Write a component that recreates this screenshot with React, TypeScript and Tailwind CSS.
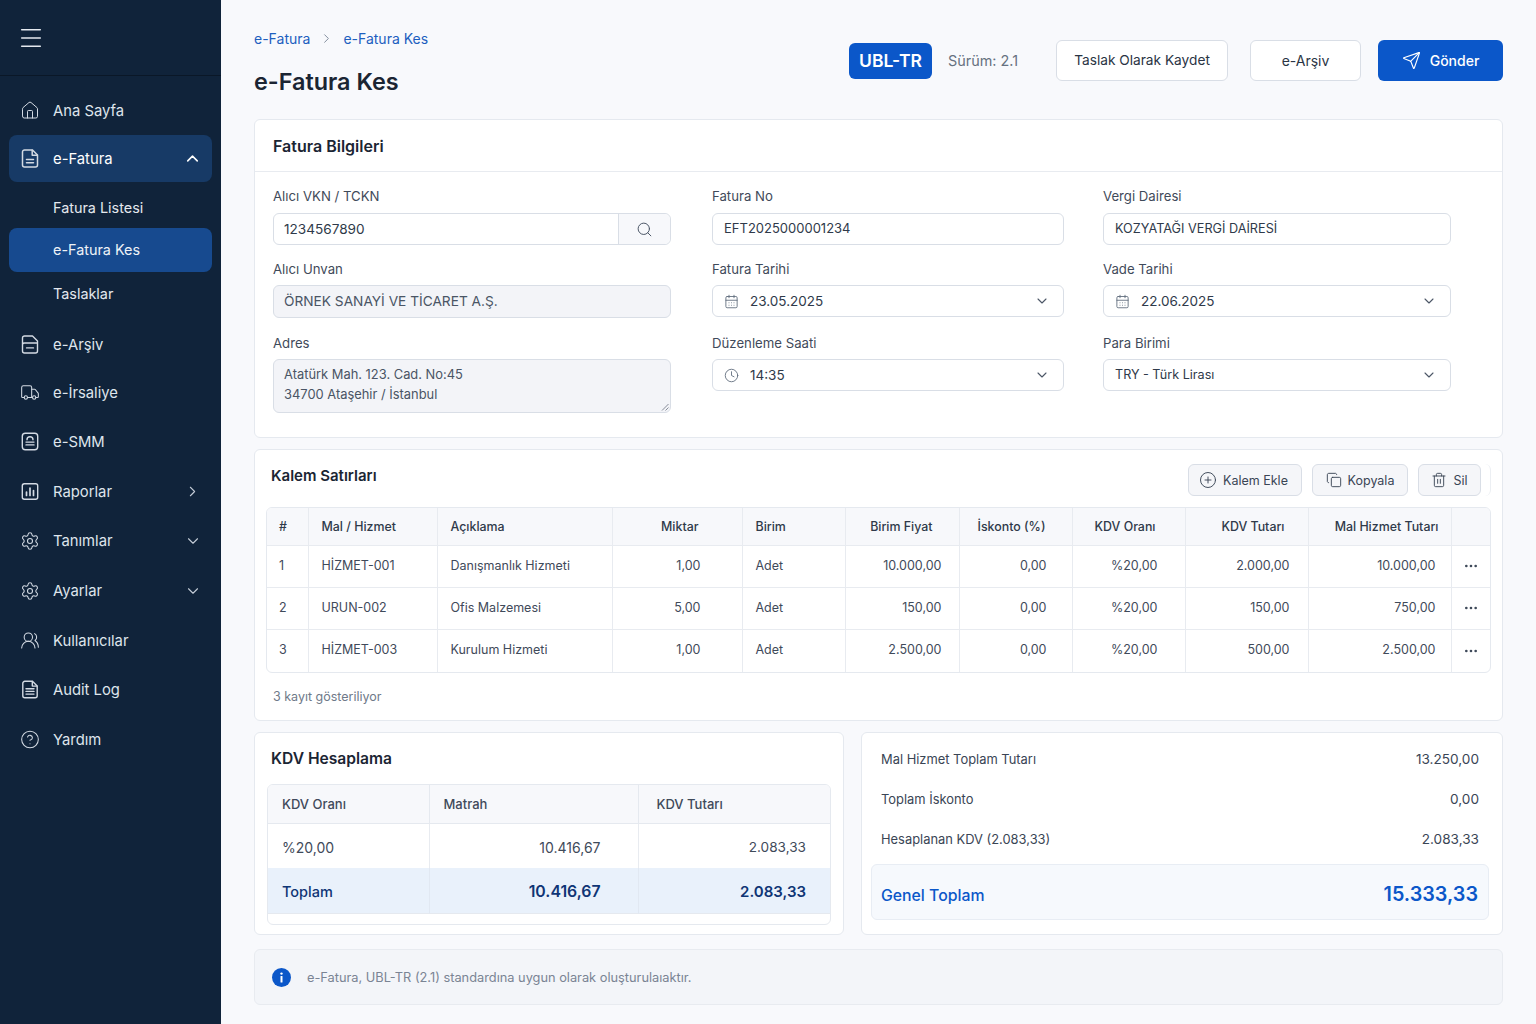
import type { ReactNode } from "react";
import {
  CalendarDays,
  ChevronDown,
  ChevronRight,
  ChevronUp,
  CircleHelp,
  CirclePlus,
  Clock,
  Copy,
  Ellipsis,
  House,
  Menu,
  Search,
  Send,
  Settings,
  Trash2,
  Truck,
  UsersRound,
} from "lucide-react";

function DocIcon() {
  return (
    <svg width="21" height="21" viewBox="0 0 20 20" fill="none" stroke="currentColor" strokeWidth="1.5" strokeLinecap="round" strokeLinejoin="round">
      <path d="M4.5 1.5h8l5 5v10a2 2 0 0 1-2 2h-11a2 2 0 0 1-2-2v-13a2 2 0 0 1 2-2z" />
      <path d="M12.2 1.8v4.9h5M6.5 11h7M6.5 14.2h7" />
    </svg>
  );
}

function ArchiveIcon() {
  return (
    <svg width="21" height="21" viewBox="0 0 20 20" fill="none" stroke="currentColor" strokeWidth="1.4" strokeLinecap="round" strokeLinejoin="round">
      <path d="M2.5 10V3.5a2 2 0 0 1 2-2h8l5 5v2H4.5a2 2 0 0 0-2 2v6a2 2 0 0 0 2 2h11a2 2 0 0 0 2-2V8.5" />
      <path d="M6.5 13.4h7" />
    </svg>
  );
}

function SmmIcon() {
  return (
    <svg width="21" height="21" viewBox="0 0 20 20" fill="none" stroke="currentColor" strokeWidth="1.4" strokeLinecap="round" strokeLinejoin="round">
      <rect x="2.3" y="1.8" width="15.4" height="16.4" rx="3" />
      <path d="M7 8.2a3 3 0 0 1 6 0M6 10.6h8M6 13.4h8" />
    </svg>
  );
}

function ReportIcon() {
  return (
    <svg width="21" height="21" viewBox="0 0 20 20" fill="none" stroke="currentColor" strokeWidth="1.4" strokeLinecap="round">
      <rect x="2.3" y="2.3" width="15.4" height="15.4" rx="2" />
      <path d="M6.5 14v-3.5M10 14V6.5M13.5 14V9" strokeWidth="1.7" />
    </svg>
  );
}

function AuditIcon() {
  return (
    <svg width="21" height="21" viewBox="0 0 20 20" fill="none" stroke="currentColor" strokeWidth="1.4" strokeLinecap="round" strokeLinejoin="round">
      <path d="M4.8 1.8h7.7l4.7 4.7v9.7a2 2 0 0 1-2 2H4.8a2 2 0 0 1-2-2V3.8a2 2 0 0 1 2-2z" />
      <path d="M12.3 2v4.6h4.7M6 9.2h8M6 11.9h8M6 14.6h8" />
    </svg>
  );
}

function NavItem({ icon, label, right, active }: { icon: ReactNode; label: string; right?: ReactNode; active?: boolean }) {
  return (
    <div className={`mx-[9px] flex h-[47px] items-center rounded-lg pl-[11px] pr-[10px] ${active ? "bg-[#173a66] text-white" : "text-[#dfe5ec]"}`}>
      <span className="flex w-[20px] justify-center text-[#d3dae3]">{icon}</span>
      <span className="ml-[13px] flex-1 pt-[2px] text-[14.8px]">{label}</span>
      {right}
    </div>
  );
}

function Sidebar() {
  return (
    <aside className="flex w-[221px] shrink-0 flex-col bg-[#10233a]">
      <div className="flex h-[76px] items-center border-b border-[#0a1727] pl-[17px] text-[#e5e9ef]">
        <Menu size={28} strokeWidth={1.3} />
      </div>
      <div className="mt-[11px] flex flex-col">
        <NavItem icon={<House size={25} strokeWidth={1.2} />} label="Ana Sayfa" />
        <div className="mt-[1px]">
          <NavItem icon={<DocIcon />} label="e-Fatura" active right={<ChevronUp size={19} strokeWidth={2} className="text-white" />} />
        </div>
        <div className="mx-[9px] flex h-[46px] items-center pl-[44px] pt-[5px] text-[14.4px] text-[#e4e8ee]">Fatura Listesi</div>
        <div className="mx-[9px] flex h-[44px] items-center rounded-lg bg-[#174a8f] pl-[44px] text-[14.4px] text-[#eef2f7]">e-Fatura Kes</div>
        <div className="mx-[9px] flex h-[44px] items-center pl-[44px] text-[14.4px] text-[#e4e8ee]">Taslaklar</div>
        <div className="mt-[5px]">
          <NavItem icon={<ArchiveIcon />} label="e-Arşiv" />
        </div>
        <div className="mt-[1px]">
          <NavItem icon={<Truck size={23} strokeWidth={1.25} />} label="e-İrsaliye" />
        </div>
        <div className="mt-[2px]">
          <NavItem icon={<SmmIcon />} label="e-SMM" />
        </div>
        <div className="mt-[3px]">
          <NavItem icon={<ReportIcon />} label="Raporlar" right={<ChevronRight size={17} strokeWidth={1.5} className="mr-[1px] text-[#c3cbd6]" />} />
        </div>
        <div className="mt-[2px]">
          <NavItem icon={<Settings size={22} strokeWidth={1.3} />} label="Tanımlar" right={<ChevronDown size={18} strokeWidth={1.5} className="text-[#c3cbd6]" />} />
        </div>
        <div className="mt-[3px]">
          <NavItem icon={<Settings size={22} strokeWidth={1.3} />} label="Ayarlar" right={<ChevronDown size={18} strokeWidth={1.5} className="text-[#c3cbd6]" />} />
        </div>
        <div className="mt-[3px]">
          <NavItem icon={<UsersRound size={23} strokeWidth={1.25} />} label="Kullanıcılar" />
        </div>
        <div className="mt-[2px]">
          <NavItem icon={<AuditIcon />} label="Audit Log" />
        </div>
        <div className="mt-[3px]">
          <NavItem icon={<CircleHelp size={23} strokeWidth={1.25} />} label="Yardım" />
        </div>
      </div>
    </aside>
  );
}

function Header() {
  return (
    <div className="flex justify-between">
      <div className="pt-[29px]">
        <div className="flex h-[18px] items-center text-[14px] text-[#1d5fbf]">
          <span>e-Fatura</span>
          <ChevronRight size={15} strokeWidth={1.5} className="mx-[9px] text-[#7b8696]" />
          <span>e-Fatura Kes</span>
        </div>
        <h1 className="mt-[19px] text-[23.4px] leading-[32px] font-semibold text-[#1b2533]">e-Fatura Kes</h1>
      </div>
      <div className="flex items-center self-start pt-[40px]">
        <span className="flex h-[36px] w-[83px] items-center justify-center rounded-md bg-[#0b57c9] pt-[1px] text-[17.5px] font-semibold text-white">UBL-TR</span>
        <span className="ml-[16px] w-[108px] text-[14.4px] text-[#667180]">Sürüm: 2.1</span>
        <button className="h-[41px] w-[172px] rounded-md border border-[#d9dee6] bg-white text-[13.7px] text-[#2a3444]">Taslak Olarak Kaydet</button>
        <button className="ml-[22px] h-[41px] w-[111px] rounded-md border border-[#d9dee6] bg-white text-[14px] text-[#2a3444]">e-Arşiv</button>
        <button className="ml-[17px] flex h-[41px] w-[125px] items-center justify-center gap-[9px] rounded-md bg-[#0b57c9] text-[14px] font-medium text-white">
          <Send size={19} strokeWidth={1.5} />
          Gönder
        </button>
      </div>
    </div>
  );
}

function FieldLabel({ text, tall }: { text: string; tall?: boolean }) {
  return <div className={`text-[13.2px] leading-[18px] text-[#3f4a5a] ${tall ? "h-[26px]" : "h-[25px]"}`}>{text}</div>;
}

function SelectBox({ icon, value, size }: { icon?: ReactNode; value: string; size: string }) {
  return (
    <div className={`flex h-[32px] items-center rounded-md border border-[#d9dee6] bg-white pl-[11px] pr-[13px] text-[#2f3a4a] ${size}`}>
      {icon ? <span className="mr-[11px] text-[#5f6b7b]">{icon}</span> : null}
      <span className="flex-1 pt-[1px]">{value}</span>
      <ChevronDown size={16} strokeWidth={1.6} className="text-[#4b5666]" />
    </div>
  );
}

function TextBox({ value, size }: { value: string; size: string }) {
  return <div className={`flex h-[32px] items-center rounded-md border border-[#d9dee6] bg-white pl-[11px] text-[#2f3a4a] ${size}`}>{value}</div>;
}

function InvoiceCard() {
  return (
    <section className="mt-[21px] h-[319px] rounded-md border border-[#e5e9ef] bg-white">
      <div className="flex h-[52px] items-center border-b border-[#e8ebf0] pl-[18px] text-[16px] font-semibold text-[#1b2533]">Fatura Bilgileri</div>
      <div className="flex pl-[18px] pt-[15px]">
        <div className="w-[398px]">
          <div className="h-[73px]">
            <FieldLabel text="Alıcı VKN / TCKN" tall />
            <div className="flex h-[32px] rounded-md border border-[#d9dee6] bg-white text-[13.6px] text-[#2f3a4a]">
              <span className="flex flex-1 items-center pl-[10px]">1234567890</span>
              <span className="flex w-[52px] items-center justify-center rounded-r-md border-l border-[#d9dee6] bg-[#f7f8fb] text-[#4b5666]">
                <Search size={17} strokeWidth={1.4} />
              </span>
            </div>
          </div>
          <div className="h-[74px]">
            <FieldLabel text="Alıcı Unvan" />
            <div className="flex h-[33px] items-center rounded-md border border-[#d9dee6] bg-[#f3f4f8] pl-[10px] text-[13.7px] text-[#4a5565]">ÖRNEK SANAYİ VE TİCARET A.Ş.</div>
          </div>
          <div>
            <FieldLabel text="Adres" />
            <div className="relative h-[54px] rounded-md border border-[#d9dee6] bg-[#f3f4f8] pl-[10px] pt-[5px] text-[12.9px] leading-[20px] text-[#4a5565]">
              <div>Atatürk Mah. 123. Cad. No:45</div>
              <div>34700 Ataşehir / İstanbul</div>
              <svg className="absolute bottom-[1px] right-[1px]" width="8" height="8" viewBox="0 0 8 8" stroke="#6b7280" strokeWidth="0.8">
                <path d="M1 7.5L7.5 1M4.5 7.5L7.5 4.5" />
              </svg>
            </div>
          </div>
        </div>
        <div className="ml-[41px] w-[352px]">
          <div className="h-[73px]">
            <FieldLabel text="Fatura No" tall />
            <TextBox value="EFT2025000001234" size="text-[13px]" />
          </div>
          <div className="h-[74px]">
            <FieldLabel text="Fatura Tarihi" />
            <SelectBox icon={<CalendarDays size={15} strokeWidth={1.4} />} value="23.05.2025" size="text-[13.5px]" />
          </div>
          <div>
            <FieldLabel text="Düzenleme Saati" />
            <SelectBox icon={<Clock size={15} strokeWidth={1.4} />} value="14:35" size="text-[13.5px]" />
          </div>
        </div>
        <div className="ml-[39px] w-[348px]">
          <div className="h-[73px]">
            <FieldLabel text="Vergi Dairesi" tall />
            <TextBox value="KOZYATAĞI VERGİ DAİRESİ" size="text-[12.7px]" />
          </div>
          <div className="h-[74px]">
            <FieldLabel text="Vade Tarihi" />
            <SelectBox icon={<CalendarDays size={15} strokeWidth={1.4} />} value="22.06.2025" size="text-[13.5px]" />
          </div>
          <div>
            <FieldLabel text="Para Birimi" />
            <SelectBox value="TRY - Türk Lirası" size="text-[12.6px]" />
          </div>
        </div>
      </div>
    </section>
  );
}

const lineItems = [
  { no: "1", code: "HİZMET-001", desc: "Danışmanlık Hizmeti", qty: "1,00", unit: "Adet", price: "10.000,00", disc: "0,00", rate: "%20,00", vat: "2.000,00", total: "10.000,00" },
  { no: "2", code: "URUN-002", desc: "Ofis Malzemesi", qty: "5,00", unit: "Adet", price: "150,00", disc: "0,00", rate: "%20,00", vat: "150,00", total: "750,00" },
  { no: "3", code: "HİZMET-003", desc: "Kurulum Hizmeti", qty: "1,00", unit: "Adet", price: "2.500,00", disc: "0,00", rate: "%20,00", vat: "500,00", total: "2.500,00" },
];

function ToolButton({ icon, label, width }: { icon: ReactNode; label: string; width: string }) {
  return (
    <button className={`flex h-[32px] items-center justify-center gap-[6px] rounded-md border border-[#d9dee6] bg-[#f5f6f9] text-[12.5px] text-[#3a4555] ${width}`}>
      {icon}
      <span className="pt-[2px]">{label}</span>
    </button>
  );
}

function ItemsCard() {
  const th = "border-r border-b border-[#e8ebf0] pt-[3px] text-[12.4px] font-medium text-[#2f3a4a]";
  const td = "border-r border-[#e8ebf0] text-[12.5px] text-[#3f4a5a]";
  return (
    <section className="mt-[11px] h-[272px] rounded-md border border-[#e5e9ef] bg-white px-[11px]">
      <div className="flex h-[46px] items-end justify-between">
        <h2 className="mb-[4px] pl-[5px] text-[15px] font-semibold leading-[32px] text-[#1b2533]">Kalem Satırları</h2>
        <div className="flex items-center">
          <ToolButton icon={<CirclePlus size={18} strokeWidth={1.25} />} label="Kalem Ekle" width="w-[114px] pr-[3px]" />
          <span className="w-[10px]" />
          <ToolButton icon={<Copy size={16} strokeWidth={1.4} />} label="Kopyala" width="w-[96px]" />
          <span className="w-[10px]" />
          <ToolButton icon={<Trash2 size={16} strokeWidth={1.4} />} label="Sil" width="w-[63px]" />
          <span className="h-[32px] w-[10px] rounded-r-md border-r border-[#eceff3]" />
        </div>
      </div>
      <div className="mt-[11px] overflow-hidden rounded-md border border-[#e5e9ef]">
        <table className="w-full table-fixed border-collapse">
          <colgroup>
            <col className="w-[41px]" />
            <col className="w-[129px]" />
            <col className="w-[175px]" />
            <col className="w-[130px]" />
            <col className="w-[103px]" />
            <col className="w-[114px]" />
            <col className="w-[113px]" />
            <col className="w-[113px]" />
            <col className="w-[123px]" />
            <col className="w-[143px]" />
            <col className="w-[39px]" />
          </colgroup>
          <thead>
            <tr className="h-[37px] bg-[#f7f8fb]">
              <th className={`${th} pl-[12px] text-left`}>#</th>
              <th className={`${th} pl-[13px] text-left`}>Mal / Hizmet</th>
              <th className={`${th} pl-[13px] text-left`}>Açıklama</th>
              <th className={`${th} pr-[43px] text-right`}>Miktar</th>
              <th className={`${th} pl-[13px] text-left`}>Birim</th>
              <th className={`${th} pr-[26px] text-right`}>Birim Fiyat</th>
              <th className={`${th} pr-[26px] text-right`}>İskonto (%)</th>
              <th className={`${th} pr-[29px] text-right`}>KDV Oranı</th>
              <th className={`${th} pr-[23px] text-right`}>KDV Tutarı</th>
              <th className={`${th} pr-[12px] text-right`}>Mal Hizmet Tutarı</th>
              <th className="border-b border-[#e8ebf0]" />
            </tr>
          </thead>
          <tbody>
            {lineItems.map((row, i) => (
              <tr key={row.no} className={i < 2 ? "h-[42px] border-b border-[#e8ebf0]" : "h-[43px]"}>
                <td className={`${td} pl-[12px]`}>{row.no}</td>
                <td className={`${td} pl-[13px]`}>{row.code}</td>
                <td className={`${td} pl-[13px]`}>{row.desc}</td>
                <td className={`${td} pr-[41px] text-right`}>{row.qty}</td>
                <td className={`${td} pl-[13px]`}>{row.unit}</td>
                <td className={`${td} pr-[17px] text-right`}>{row.price}</td>
                <td className={`${td} pr-[25px] text-right`}>{row.disc}</td>
                <td className={`${td} pr-[27px] text-right`}>{row.rate}</td>
                <td className={`${td} pr-[18px] text-right`}>{row.vat}</td>
                <td className={`${td} pr-[15px] text-right`}>{row.total}</td>
                <td className="pl-[11px] text-[#3f4a5a]">
                  <Ellipsis size={16} strokeWidth={2} />
                </td>
              </tr>
            ))}
          </tbody>
        </table>
      </div>
      <div className="mt-[15px] pl-[7px] text-[12.5px] text-[#6f7a89]">3 kayıt gösteriliyor</div>
    </section>
  );
}

function VatCard() {
  const th = "border-r border-b border-[#e5e9ef] pl-[14px] pt-[2px] text-left text-[13px] font-medium text-[#3f4a5a]";
  return (
    <section className="h-[203px] w-[590px] rounded-md border border-[#e5e9ef] bg-white px-[12px]">
      <h2 className="pl-[4px] pt-[14px] text-[15.6px] font-semibold leading-[24px] text-[#1b2533]">KDV Hesaplama</h2>
      <div className="mt-[13px] h-[141px] overflow-hidden rounded-md border border-[#e5e9ef]">
        <table className="w-full table-fixed border-collapse">
          <colgroup>
            <col className="w-[161px]" />
            <col className="w-[209px]" />
            <col className="w-[192px]" />
          </colgroup>
          <thead>
            <tr className="h-[38px] bg-[#f7f8fb]">
              <th className={th}>KDV Oranı</th>
              <th className={th}>Matrah</th>
              <th className="border-b border-[#e5e9ef] pl-[18px] pt-[2px] text-left text-[13px] font-medium text-[#3f4a5a]">KDV Tutarı</th>
            </tr>
          </thead>
          <tbody>
            <tr className="h-[45px] text-[#3f4a5a]">
              <td className="border-r border-[#e8ebf0] pl-[14px] pt-[3px] text-[14px]">%20,00</td>
              <td className="border-r border-[#e8ebf0] pr-[37px] pt-[3px] text-right text-[14px]">10.416,67</td>
              <td className="pr-[24px] pt-[3px] text-right text-[13.6px]">2.083,33</td>
            </tr>
            <tr className="h-[45px] border-b border-[#e5e9ef] bg-[#e9f1fb] text-[#0f3575]">
              <td className="border-r border-[#e1e8f2] pl-[14px] pt-[3px] text-[14.5px] font-medium">Toplam</td>
              <td className="border-r border-[#e1e8f2] pr-[37px] pt-[3px] text-right text-[15.8px] font-semibold">10.416,67</td>
              <td className="pr-[24px] pt-[3px] text-right text-[15px] font-semibold">2.083,33</td>
            </tr>
          </tbody>
        </table>
      </div>
    </section>
  );
}

function SummaryRow({ label, value }: { label: string; value: string }) {
  return (
    <div className="flex h-[40px] items-center justify-between pl-[19px] pr-[23px] text-[13.6px] text-[#3a4555]">
      <span className="pt-[2px] text-[12.9px]">{label}</span>
      <span>{value}</span>
    </div>
  );
}

function SummaryCard() {
  return (
    <section className="ml-[17px] h-[203px] flex-1 rounded-md border border-[#e5e9ef] bg-white pt-[6px]">
      <SummaryRow label="Mal Hizmet Toplam Tutarı" value="13.250,00" />
      <SummaryRow label="Toplam İskonto" value="0,00" />
      <SummaryRow label="Hesaplanan KDV (2.083,33)" value="2.083,33" />
      <div className="ml-[9px] mr-[13px] mt-[5px] flex h-[56px] items-center justify-between rounded-md border border-[#e8edf4] bg-[#f6f9fd] pl-[9px] pr-[10px] text-[#0b57c9]">
        <span className="pt-[7px] text-[15.8px] font-medium">Genel Toplam</span>
        <span className="pt-[5px] text-[19.8px] font-semibold">15.333,33</span>
      </div>
    </section>
  );
}

export default function App() {
  return (
    <div className="flex h-[1024px] overflow-hidden bg-[#f8f9fc] font-['Inter',sans-serif]">
      <Sidebar />
      <main className="flex-1 px-[33px]">
        <Header />
        <InvoiceCard />
        <ItemsCard />
        <div className="mt-[11px] flex">
          <VatCard />
          <SummaryCard />
        </div>
        <div className="mt-[14px] flex h-[56px] items-center rounded-md border border-[#e8ebf0] bg-[#f3f5f9] pl-[17px]">
          <svg width="19" height="19" viewBox="0 0 19 19">
            <circle cx="9.5" cy="9.5" r="9.5" fill="#0b57c9" />
            <rect x="8.5" y="8" width="2" height="6.5" rx="0.5" fill="#fff" />
            <circle cx="9.5" cy="5.6" r="1.2" fill="#fff" />
          </svg>
          <span className="ml-[16px] pt-[2px] text-[12.8px] text-[#7a8494]">e-Fatura, UBL-TR (2.1) standardına uygun olarak oluşturulaıaktır.</span>
        </div>
      </main>
    </div>
  );
}
